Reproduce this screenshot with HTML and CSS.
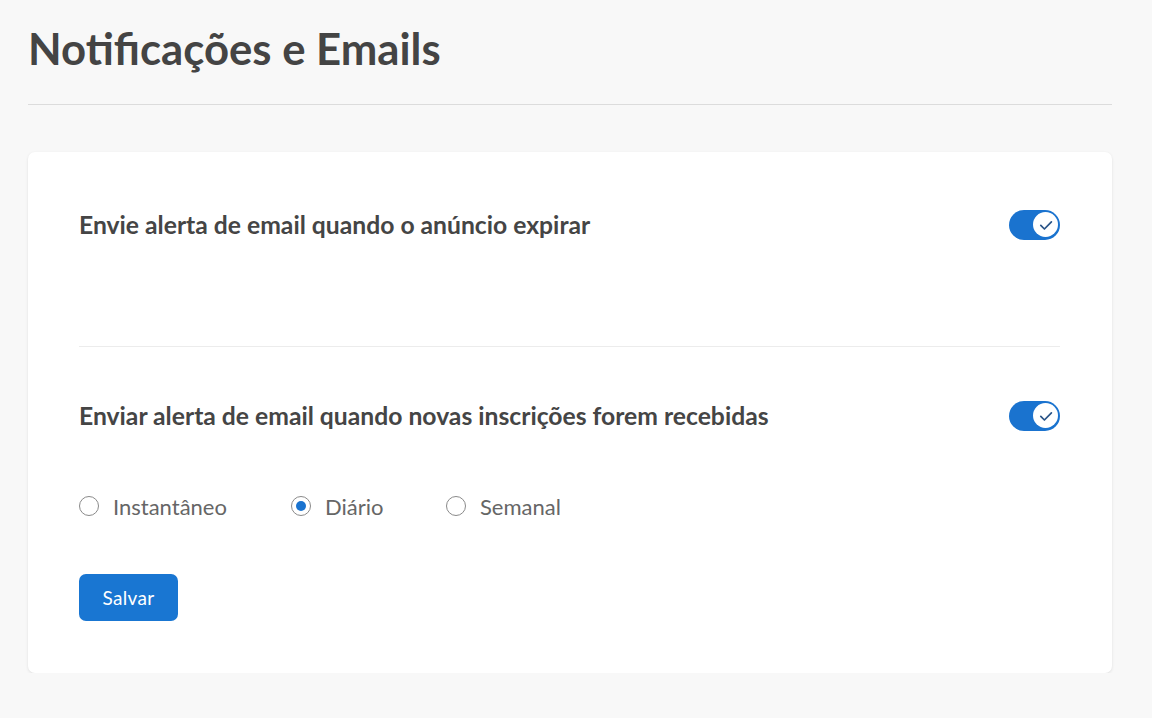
FILE: index.html
```html
<!DOCTYPE html>
<html lang="pt">
<head>
<meta charset="utf-8">
<title>Notificações e Emails</title>
<link rel="stylesheet" href="styles.css">
</head>
<body>
<main class="page">
  <h1 class="title">Notificações e Emails</h1>
  <hr class="rule">
  <section class="card">
    <div class="setting first">
      <span class="setting-label">Envie alerta de email quando o anúncio expirar</span>
      <span class="toggle" role="switch" aria-checked="true">
        <span class="knob">
          <svg viewBox="0 0 24 24" width="24" height="24"><path d="M6.8 12.4l3.6 3.6 7-7.2" fill="none" stroke="#2a5487" stroke-width="1.7" stroke-linecap="round" stroke-linejoin="round"/></svg>
        </span>
      </span>
    </div>
    <div class="divider"></div>
    <div class="setting second">
      <span class="setting-label">Enviar alerta de email quando novas inscrições forem recebidas</span>
      <span class="toggle" role="switch" aria-checked="true">
        <span class="knob">
          <svg viewBox="0 0 24 24" width="24" height="24"><path d="M6.8 12.4l3.6 3.6 7-7.2" fill="none" stroke="#2a5487" stroke-width="1.7" stroke-linecap="round" stroke-linejoin="round"/></svg>
        </span>
      </span>
    </div>
    <div class="radios">
      <label class="radio w1"><span class="dot"></span>Instantâneo</label>
      <label class="radio w2"><span class="dot checked"></span>Diário</label>
      <label class="radio"><span class="dot"></span>Semanal</label>
    </div>
    <button class="save">Salvar</button>
  </section>
</main>
</body>
</html>
```

FILE: styles.css
```css
html, body {
  margin: 0;
  padding: 0;
  background: #f8f8f8;
}
body {
  font-family: "Lato", "Noto Sans", sans-serif;
  color: #444;
}
.page {
  padding: 0 40px 0 28px;
}
.title {
  margin: 0;
  padding-top: 22px;
  height: 54px;
  font-size: 43.7px;
  line-height: 52px;
  font-weight: 700;
  color: #444;
}
.rule {
  margin: 28px 0 0 0;
  border: 0;
  border-top: 1px solid #dcdcdc;
  height: 0;
}
.card {
  margin-top: 47px;
  background: #fff;
  border-radius: 7px;
  box-shadow: 0 1px 3px rgba(0,0,0,0.10);
  padding: 57px 52px 52px 51px;
}
.setting {
  display: flex;
  align-items: center;
  justify-content: space-between;
  height: 31px;
}
.setting-label {
  font-size: 24.7px;
  font-weight: 700;
  color: #454545;
}
.divider {
  margin: 106px 0 53px;
  border-top: 1px solid #ececec;
}
.toggle {
  width: 51px;
  height: 30px;
  border-radius: 15px;
  background: #1a73cf;
  display: flex;
  align-items: center;
  justify-content: flex-end;
  padding-right: 2px;
  box-sizing: border-box;
}
.knob {
  width: 25px;
  height: 25px;
  border-radius: 50%;
  background: #fff;
  display: flex;
  align-items: center;
  justify-content: center;
}
.radios {
  display: flex;
  align-items: center;
  margin-top: 65px;
  height: 20px;
}
.radio {
  display: flex;
  align-items: center;
  font-size: 22px;
  color: #666;
}
.radio.w1 { width: 212px; }
.radio.w2 { width: 155px; }
.dot {
  width: 20px;
  height: 20px;
  box-sizing: border-box;
  border: 1.5px solid #8a8a8a;
  border-radius: 50%;
  margin-right: 14px;
  display: flex;
  align-items: center;
  justify-content: center;
}
.dot.checked::after {
  content: "";
  width: 10px;
  height: 10px;
  border-radius: 50%;
  background: #1a73cf;
}
.save {
  display: block;
  margin-top: 58px;
  width: 99px;
  height: 47px;
  border: 0;
  border-radius: 7px;
  background: #1976d2;
  color: #fff;
  font-family: "Lato", "Noto Sans", sans-serif;
  font-size: 19px;
  letter-spacing: 0.3px;
}
```
